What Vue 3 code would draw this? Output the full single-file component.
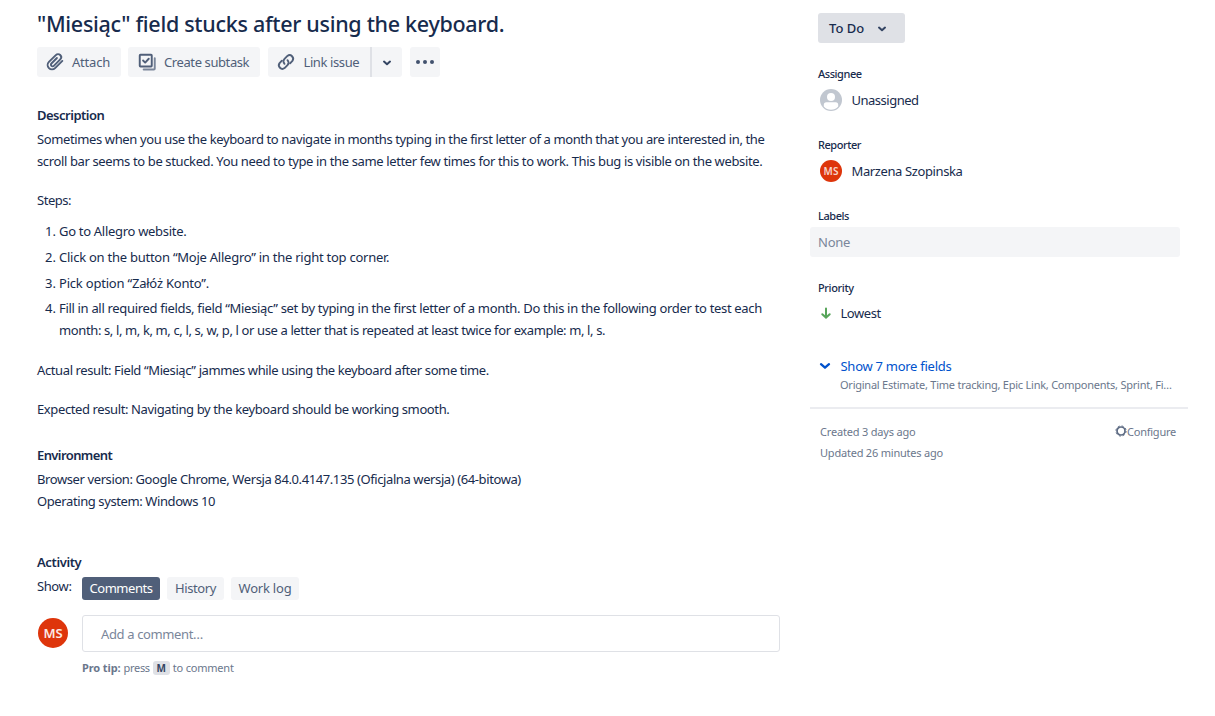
<script setup>
const steps = [
  [{ text: 'Go to Allegro website.', cls: 'ls30' }],
  [{ text: 'Click on the button “Moje Allegro” in the right top corner.', cls: 'ls25' }],
  [{ text: 'Pick option “Załóż Konto”.', cls: 'ls21' }],
  [
    {
      text: 'Fill in all required fields, field “Miesiąc” set by typing in the first letter of a month. Do this in the following order to test each',
      cls: 'ls32',
    },
    {
      text: 'month: s, l, m, k, m, c, l, s, w, p, l or use a letter that is repeated at least twice for example: m, l, s.',
      cls: 'ls38',
    },
  ],
]
</script>

<template>
  <div class="page">
    <main class="main">
      <h1 class="title"><span class="t">"Miesiąc" field stucks after using the keyboard.</span></h1>
      <div class="toolbar">
        <button class="btn attach">
          <svg class="icon" viewBox="0 0 24 24"><path d="M20.800 10.700l-8.700 8.600a5.200 5.200 0 0 1-7.400-7.400l8.300-8.200a3.700 3.700 0 0 1 5.300 5.200l-7.700 7.700a2 2 0 0 1-2.900-2.800l6.600-6.600" /></svg>
          <span class="t ls21">Attach</span>
        </button>
        <button class="btn subtask">
          <svg class="icon" viewBox="0 0 24 24"><rect x="3.300" y="3.300" width="14.400" height="14" rx="0.800" /><path d="M7.300 10.200l2.500 2.500 4.300-4.600" /><path class="back" d="M21.300 7.500v12.500a1 1 0 0 1-1 1H8" /></svg>
          <span class="t ls40">Create subtask</span>
        </button>
        <div class="split">
          <button class="btn link">
            <svg class="icon" viewBox="0 0 24 24"><path d="M10.200 14.200a4.300 4.300 0 0 1 0-6l3.500-3.500a4.300 4.300 0 0 1 6 6l-2.800 2.900" /><path d="M13.800 9.800a4.300 4.300 0 0 1 0 6l-3.500 3.500a4.300 4.300 0 0 1-6-6l2.800-2.900" /></svg>
            <span class="t ls40">Link issue</span>
          </button>
          <button class="btn drop"><svg class="chev" viewBox="0 0 10 6"><path d="M2 1.600L5 4.300l3-2.700" /></svg></button>
        </div>
        <button class="btn more"><i /><i /><i /></button>
      </div>

      <h2 class="heading"><span class="t ls50">Description</span></h2>
      <div class="text">
        <p><span class="t ls38">Sometimes when you use the keyboard to navigate in months typing in the first letter of a month that you are interested in, the</span><br /><span class="t ls37">scroll bar seems to be stucked. You need to type in the same letter few times for this to work. This bug is visible on the website.</span></p>
        <p><span class="t ls46">Steps:</span></p>
        <ol class="steps">
          <li v-for="(step, i) in steps" :key="i">
            <span class="num">{{ i + 1 }}.</span>
            <div><div v-for="line in step" :key="line.text"><span class="t" :class="line.cls">{{ line.text }}</span></div></div>
          </li>
        </ol>
        <p><span class="t ls39">Actual result: Field “Miesiąc” jammes while using the keyboard after some time.</span></p>
        <p><span class="t ls39">Expected result: Navigating by the keyboard should be working smooth.</span></p>
      </div>

      <h2 class="heading env"><span class="t ls60">Environment</span></h2>
      <div class="text">
        <p><span class="t ls40">Browser version: Google Chrome, Wersja 84.0.4147.135 (Oficjalna wersja) (64-bitowa)</span><br /><span class="t ls40">Operating system: Windows 10</span></p>
      </div>

      <h2 class="heading activity"><span class="t ls39">Activity</span></h2>
      <div class="tabs">
        <span class="show"><span class="t ls40">Show:</span></span>
        <button class="tab active"><span class="t ls46">Comments</span></button>
        <button class="tab history"><span class="t ls37">History</span></button>
        <button class="tab worklog"><span class="t ls21">Work log</span></button>
      </div>
      <div class="comment">
        <span class="avatar large">MS</span>
        <div class="field"><span class="t ls37">Add a comment…</span></div>
      </div>
      <div class="tip"><b class="t ls10">Pro tip:</b><span class="t press ls32">press</span><kbd>M</kbd><span class="t ls21">to comment</span></div>
    </main>

    <aside class="side">
      <button class="status"><span class="t">To Do</span><svg class="chev" viewBox="0 0 10 6"><path d="M2 1.600L5 4.300l3-2.700" /></svg></button>
      <div class="label first"><span class="t">Assignee</span></div>
      <div class="person">
        <svg class="anon" viewBox="0 0 22 22"><circle cx="11" cy="11" r="11" fill="#c1c7d0" /><circle cx="11" cy="8" r="4" fill="#fff" /><path d="M3.800 17.500v-1.700A2.500 2.500 0 0 1 6.300 13.300h9.400a2.500 2.500 0 0 1 2.500 2.500v1.700a9.600 9.600 0 0 1-14.400 0z" fill="#fff" /></svg>
        <span class="t ls50">Unassigned</span>
      </div>
      <div class="label"><span class="t">Reporter</span></div>
      <div class="person"><span class="avatar">MS</span><span class="t ls39">Marzena Szopinska</span></div>
      <div class="label"><span class="t">Labels</span></div>
      <div class="none"><span class="t ls25">None</span></div>
      <div class="label prio"><span class="t ls38">Priority</span></div>
      <div class="priority">
        <svg viewBox="0 0 12 12"><path d="M6 1.500v9M2.300 7.200L6 10.600l3.700-3.400" /></svg>
        <span class="t ls46">Lowest</span>
      </div>
      <div class="showmore"><svg viewBox="0 0 12 8"><path d="M2 2.200l4 3.500 4-3.500" /></svg><span class="t ls27">Show 7 more fields</span></div>
      <div class="fields"><span class="t ls24">Original Estimate, Time tracking, Epic Link, Components, Sprint, Fi…</span></div>
      <footer class="foot">
        <div><div><span class="t ls20">Created 3 days ago</span></div><div><span class="t ls21">Updated 26 minutes ago</span></div></div>
        <div class="config">
          <svg viewBox="0 0 12 12"><circle cx="6" cy="6" r="4" /><circle class="teeth" cx="6" cy="6" r="5.100" /></svg><span class="t ls24">Configure</span>
        </div>
      </footer>
    </aside>
  </div>
</template>

<style>
body {
  background: #fff;
}
</style>

<style scoped>
* {
  box-sizing: border-box;
}
.page {
  display: flex;
  width: 1215px;
  height: 716px;
  overflow: hidden;
  font: 13px/22px "Noto Sans", sans-serif;
  color: #172b4d;
}
.t { white-space: nowrap; }
.ls10 { letter-spacing: -0.1px; }
.ls20 { letter-spacing: -0.19px; }
.ls21 { letter-spacing: -0.21px; }
.ls24 { letter-spacing: -0.24px; }
.ls25 { letter-spacing: -0.25px; }
.ls27 { letter-spacing: -0.27px; }
.ls30 { letter-spacing: -0.3px; }
.ls32 { letter-spacing: -0.32px; }
.ls37 { letter-spacing: -0.37px; }
.ls38 { letter-spacing: -0.38px; }
.ls39 { letter-spacing: -0.387px; }
.ls40 { letter-spacing: -0.4px; }
.ls46 { letter-spacing: -0.46px; }
.ls50 { letter-spacing: -0.5px; }
.ls60 { letter-spacing: -0.6px; }
.main { width: 743px; margin-left: 37px; padding-top: 10px; flex: none; }
h1, h2, p, ol { margin: 0; padding: 0; }
button { border: 0; padding: 0; font: inherit; color: inherit; }
.title { font-size: 21.500px; line-height: 28px; font-weight: 500; letter-spacing: -0.3px; }
.toolbar { display: flex; gap: 8px; margin-top: 9px; color: #505f79; }
.btn { height: 30px; background: #f4f5f7; border-radius: 3px; display: flex; align-items: center; }
.attach { width: 84px; margin-right: -1px; }
.subtask { width: 132px; }
.link { width: 102px; border-radius: 3px 0 0 3px; }
.split { display: flex; }
.drop { width: 32px; border-left: 2px solid #dfe1e6; border-radius: 0 3px 3px 0; justify-content: center; }
.more { width: 30px; justify-content: center; gap: 2.700px; }
.more i { width: 4px; height: 4px; border-radius: 50%; background: #42526e; }
.icon { width: 20px; height: 20px; margin: 0 7px 0 9px; fill: none; stroke: #505f79; stroke-width: 2.300; stroke-linecap: round; stroke-linejoin: round; flex: none; }
.attach .icon, .link .icon { margin-left: 8px; }
.link .icon { margin-right: 7.500px; }
.back { stroke: #7a869a; }
.chev { width: 10px; height: 6px; fill: none; stroke: #344563; stroke-width: 2; stroke-linecap: round; stroke-linejoin: round; margin-top: 1px; }
.heading { font-size: 13px; line-height: 22px; font-weight: 600; margin-top: 27px; }
.text { margin-top: 2px; }
.text p + p { margin-top: 17px; }
.steps { list-style: none; margin: 9px 0 18px; }
.steps li { display: flex; margin-top: 4px; }
.steps li:last-child { margin-top: 3px; }
.num { width: 22px; padding-left: 8px; flex: none; white-space: nowrap; }
.env { margin-top: 24px; }
.activity { margin-top: 39px; }
.tabs { display: flex; margin-top: 4px; height: 23px; }
.show { width: 45px; line-height: 19px; }
.tab { height: 23px; background: #f4f5f7; color: #505f79; border-radius: 3px; margin-right: 7px; text-align: center; line-height: 22px; padding-bottom: 1px; }
.tab.active { width: 78px; background: #505f79; color: #fff; }
.history { width: 57px; }
.worklog { width: 68px; }
.comment { display: flex; margin-top: 15px; height: 37px; }
.avatar { width: 22px; height: 22px; border-radius: 50%; background: #de350b; color: #f7d5cc; font-size: 10px; font-weight: 600; line-height: 22px; text-align: center; flex: none; }
.avatar.large { width: 30px; height: 30px; line-height: 30px; font-size: 13px; margin: 3px 14px 0 1px; color: #fbe9e4; }
.field { width: 698px; border: 1px solid #dfe1e6; border-radius: 3px; padding: 7px 18px; color: #7a869a; }
.tip { display: flex; align-items: center; margin: 8px 0 0 45px; font-size: 11px; line-height: 16px; color: #6b778c; }
.tip .press { margin: 0 3px; }
kbd { font: bold 10px/14px "Noto Sans", sans-serif; background: #dfe1e6; color: #344563; width: 17px; height: 14px; border-radius: 3px; text-align: center; margin-right: 3px; }
.side { width: 378px; margin-left: 30px; padding-top: 13px; }
.status { display: flex; align-items: center; width: 87px; height: 30px; margin-left: 8px; padding-left: 11px; background: #dfe1e6; border-radius: 3px; font-weight: 500; gap: 13px; }
.label { margin: 25px 0 0 8px; font-size: 11px; line-height: 16px; font-weight: 500; letter-spacing: -0.45px; }
.label.first, .label.prio { margin-top: 23px; }
.person { display: flex; height: 24px; margin: 6px 0 0 10px; align-items: center; gap: 9.500px; }
.anon { width: 22px; height: 22px; }
.none { width: 370px; height: 30px; background: #f4f5f7; border-radius: 3px; line-height: 30px; padding-left: 8px; color: #7a869a; margin-top: 3px; }
.priority { display: flex; align-items: center; margin: 6px 0 0 9.500px; gap: 9px; }
.priority svg { width: 12px; height: 12px; fill: none; stroke: #57a55a; stroke-width: 2; stroke-linecap: round; }
.showmore { display: flex; align-items: center; margin: 31px 0 0 9px; gap: 9.500px; color: #0052cc; }
.showmore svg { width: 12px; height: 8px; fill: none; stroke: #0052cc; stroke-width: 2.300; stroke-linecap: round; stroke-linejoin: round; }
.fields { margin-left: 30px; font-size: 11px; line-height: 16px; color: #6b778c; }
.foot { margin-top: 14px; border-top: 2px solid #ebecf0; padding: 12px 12px 0 10px; display: flex; justify-content: space-between; font-size: 11px; line-height: 21px; color: #6b778c; }
.config { display: flex; align-items: center; height: 21px; }
.config svg { width: 12px; height: 12px; fill: none; stroke: #5e6c84; stroke-width: 1.700; margin-top: -2px; }
.config .teeth { stroke-width: 1; stroke-dasharray: 2.003 2.003; }
</style>
